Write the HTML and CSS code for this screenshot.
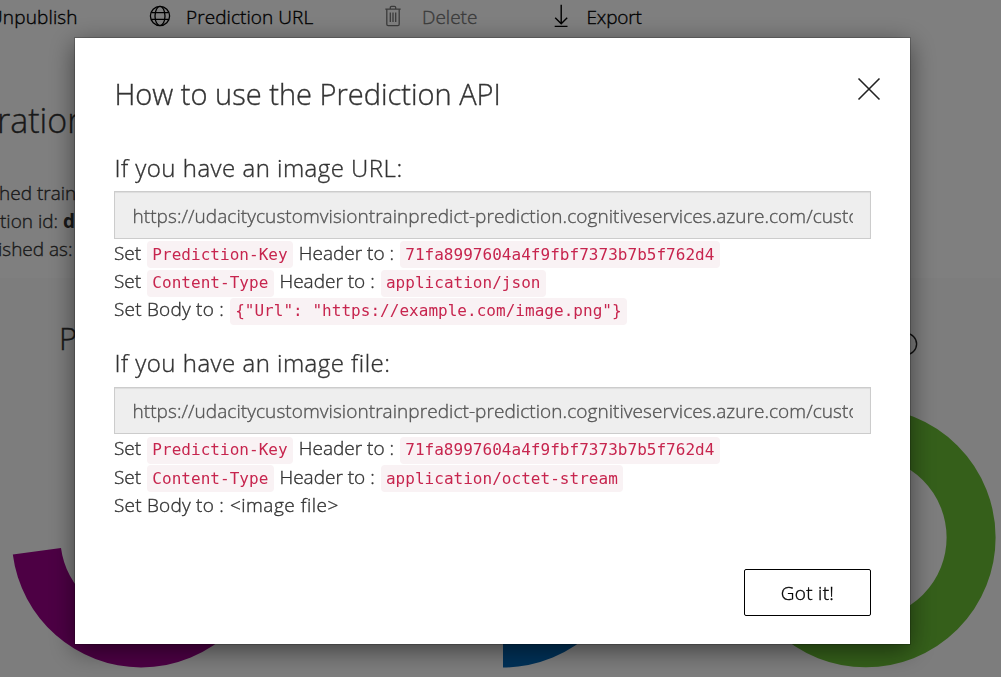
FILE: index.html
```html
<!DOCTYPE html>
<html lang="en">
<head>
<meta charset="utf-8">
<title>Prediction API</title>
<link rel="stylesheet" href="styles.css">
</head>
<body>
<div class="page">
  <nav class="toolbar">
    <span class="tool tool-unpublish">Unpublish</span>
    <span class="tool tool-url">
      <svg class="icon" width="22" height="22" viewBox="0 0 22 22"><circle cx="11" cy="11" r="9.6"/><ellipse cx="11" cy="11" rx="5" ry="9.6"/><path d="M2.3 7.6h17.4M2.3 14.4h17.4"/></svg>
      Prediction URL
    </span>
    <span class="tool tool-delete">
      <svg class="icon" width="18" height="22" viewBox="0 0 18 22"><path d="M1.3 4.1h15.4M6.3 4V2.6c0-.7.5-1.2 1.2-1.2h3c.7 0 1.2.5 1.2 1.2V4M2.8 4.5v14.8c0 .8.5 1.3 1.3 1.3h9.8c.8 0 1.3-.5 1.3-1.3V4.5M6.3 7.5v9.6M9 7.5v9.6M11.7 7.5v9.6"/></svg>
      Delete
    </span>
    <span class="tool tool-export">
      <svg class="icon icon-export" width="16" height="24" viewBox="0 0 16 24"><path d="M8.2 .8v19M2.200 13.800l6 6 6-6M1.700 22.400h12.800"/></svg>
      Export
    </span>
  </nav>
  <header class="summary">
    <h1 class="iteration">ration</h1>
    <p class="meta">hed train</p>
    <p class="meta">tion id: <b>d</b></p>
    <p class="meta">ished as:</p>
  </header>
  <main class="charts">
    <h2 class="chart-title">P</h2>
    <svg class="info" width="24" height="24" viewBox="0 0 24 24"><circle cx="12" cy="12" r="10.6"/></svg>
    <svg class="donuts" width="1001" height="399" viewBox="0 278 1001 399">
      <path fill="#9a0089" d="M12.8 554.5A130 130 0 0 0 141 667.5A130 130 0 0 0 271 537.5H222A81 81 0 0 1 141 618.500A81 81 0 0 1 61 548Z"/>
      <path fill="#0063b1" d="M503 667.5A130 130 0 0 0 633 537.5H584A81 81 0 0 1 503 618.5Z"/>
      <circle cx="865.8" cy="537.5" r="105.3" fill="none" stroke="#6abf35" stroke-width="49"/>
    </svg>
  </main>
</div>

<div class="overlay">
  <section class="dialog">
    <div class="dialog-head">
      <h1 class="dialog-title">How to use the Prediction API</h1>
      <svg class="close" width="24" height="24" viewBox="0 0 24 24"><path d="M1.5 1.5l21 21M22.5 1.5l-21 21"/></svg>
    </div>

    <div class="method">
      <h2 class="method-title">If you have an image URL:</h2>
      <div class="endpoint"><span class="endpoint-text">https://udacitycustomvisiontrainpredict-prediction.cognitiveservices.azure.com/customvision/v3.0/Prediction</span></div>
      <p class="line"><span>Set</span><code>Prediction-Key</code><span>Header to :</span><code>71fa8997604a4f9fbf7373b7b5f762d4</code></p>
      <p class="line"><span>Set</span><code>Content-Type</code><span>Header to :</span><code>application/json</code></p>
      <p class="line"><span class="body-label">Set Body to :</span><code>{"Url": "https://example.com/image.png"}</code></p>
    </div>

    <div class="method">
      <h2 class="method-title">If you have an image file:</h2>
      <div class="endpoint"><span class="endpoint-text">https://udacitycustomvisiontrainpredict-prediction.cognitiveservices.azure.com/customvision/v3.0/Prediction</span></div>
      <p class="line"><span>Set</span><code>Prediction-Key</code><span>Header to :</span><code>71fa8997604a4f9fbf7373b7b5f762d4</code></p>
      <p class="line"><span>Set</span><code>Content-Type</code><span>Header to :</span><code>application/octet-stream</code></p>
      <p class="line"><span class="body-label">Set Body to :</span><span class="file">&lt;image file&gt;</span></p>
    </div>

    <div class="actions"><button class="confirm">Got it!</button></div>
  </section>
</div>
</body>
</html>
```
FILE: styles.css
```css
* { box-sizing: border-box; }

body {
  margin: 0;
  height: 677px;
  overflow: hidden;
  font: 300 19px/28px "Open Sans", "Noto Sans", sans-serif;
  color: #333;
  -webkit-text-stroke: .35px currentColor;
}

h1, h2, p { margin: 0; font-weight: 300; }

/* Page behind the dialog */
.page {
  height: 677px;
  display: flex;
  flex-direction: column;
  background: #fff;
  overflow: hidden;
}

.toolbar {
  display: flex;
  height: 32px;
  padding-top: 3px;
  color: #000;
  white-space: nowrap;
}

.tool { display: flex; flex: none; gap: 15px; align-items: center; height: 28px; }
.tool-unpublish { width: 160px; margin-left: -11px; letter-spacing: .15px; }
.tool-url { width: 235px; letter-spacing: .07px; }
.tool-delete { width: 169px; gap: 20px; color: #767676; }
.tool-export { gap: 17.5px; letter-spacing: -.15px; }

.icon {
  flex: none;
  fill: none;
  stroke: currentColor;
  stroke-width: 1.3;
  margin-top: -3px;
}
.icon-export { stroke-width: 1.4; }

.summary { height: 246px; padding-top: 65px; white-space: nowrap; }
.iteration { margin: 0 0 36px -3px; font-size: 34px; line-height: 46px; }
.meta { line-height: 28px; }
.meta:nth-child(2) { text-indent: -1px; }
.meta:nth-child(4) { text-indent: -2px; }
.meta b { font-weight: 700; -webkit-text-stroke: 0; }

.charts { position: relative; flex: 1; background: #fafafa; }
.chart-title { padding: 39px 0 0 59px; font-size: 31px; line-height: 42px; }
.info {
  position: absolute;
  left: 894px;
  top: 54px;
  fill: none;
  stroke: #222;
  stroke-width: 1.4;
}
.donuts { position: absolute; left: 0; top: 0; }

/* Dialog */
.overlay {
  position: fixed;
  inset: 0;
  display: flex;
  align-items: flex-start;
  padding: 38px 0 0 75px;
  background: rgba(0, 0, 0, .5);
}

.dialog {
  width: 835px;
  height: 606px;
  padding: 36px 39px 0;
  background: #fff;
  box-shadow: 0 0 0 1px rgba(0, 0, 0, .2), 0 6px 24px rgba(0, 0, 0, .5);
}

.dialog-head { display: flex; justify-content: space-between; height: 77.5px; }
.dialog-title { padding-left: .5px; font-size: 29px; line-height: 40px; }
.close {
  margin: 3.4px -10.4px 0 0;
  fill: none;
  stroke: #222;
  stroke-width: 1.6;
}

.method { margin-bottom: 24.2px; }
.method-title {
  margin-bottom: 7.5px;
  padding-left: .4px;
  font-size: 24px;
  line-height: 32px;
  letter-spacing: .48px;
}

.endpoint {
  width: 757px;
  height: 47.5px;
  padding: 9.9px 17px 0 17.5px;
  border: 1px solid #ccc;
  background: #eee;
  box-shadow: inset 0 1px 1px rgba(0, 0, 0, .075);
  color: #555;
}
.endpoint-text {
  display: block;
  overflow: hidden;
  white-space: nowrap;
  letter-spacing: .065px;
}

.line {
  display: flex;
  align-items: baseline;
  gap: 6px;
  height: 28.13px;
  padding-top: .4px;
  white-space: nowrap;
}
.line code {
  padding: 3.5px 5.2px;
  border-radius: 4px;
  background: #f9f2f4;
  color: #c7254e;
  font: 16px/20px "DejaVu Sans Mono", monospace;
  letter-spacing: .03px;
  -webkit-text-stroke: 0;
}
.body-label { letter-spacing: .22px; }
.file { letter-spacing: .5px; }

.actions { display: flex; justify-content: flex-end; margin-top: 50.5px; }
.confirm {
  width: 127px;
  height: 47px;
  padding-top: 2px;
  border: 1px solid #000;
  border-radius: 2px;
  background: #fff;
  color: #000;
  font: inherit;
  letter-spacing: .3px;
  -webkit-text-stroke: .35px currentColor;
}
```
